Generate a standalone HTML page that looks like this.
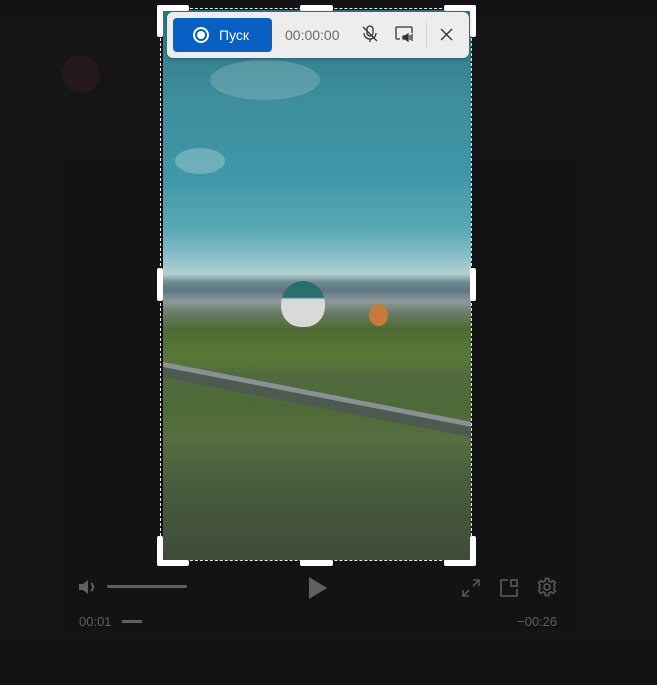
<!DOCTYPE html><html><head><style>
body{margin:0;width:657px;height:685px;background:#151517;position:relative;overflow:hidden;font-family:"Liberation Sans",sans-serif}
.a{position:absolute}
</style></head><body>
<div class="a" style="left:0;top:0;width:657px;height:18px;background:#131315"></div>
<div class="a" style="left:62px;top:55px;width:38px;height:38px;border-radius:50%;background:#24191a"></div>
<div class="a" style="left:60px;top:160px;width:520px;height:470px;background:#121315"></div>
<div class="a" style="left:0;top:640px;width:657px;height:45px;background:#131315"></div>
<div class="a" style="left:163px;top:10px;width:308px;height:550px;overflow:hidden;background:linear-gradient(180deg,#2c7684 0%,#3d8c9c 15%,#3f97a7 30%,#5aa8b6 40%,#8cc0ca 45%,#b3d0d3 48%,#6f8a92 49.5%,#5d7782 51%,#8e9a9a 53%,#6b7d68 55%,#4f6b34 58%,#587836 63%,#516a3e 67%,#4d6a36 72%,#566e40 78%,#4a5e3e 85%,#44553c 92%,#3e4c38 100%)">
<div class="a" style="left:0;top:352px;width:330px;height:5px;background:#8a9196;transform:rotate(11deg);transform-origin:0 0"></div>
<div class="a" style="left:0;top:357px;width:330px;height:10px;background:#4d5a50;transform:rotate(11deg);transform-origin:0 0"></div>
<div class="a" style="left:12px;top:138px;width:50px;height:26px;border-radius:50%;background:rgba(200,220,225,.35)"></div>
<div class="a" style="left:47px;top:50px;width:110px;height:40px;border-radius:50%;background:rgba(190,215,220,.25)"></div>
<div class="a" style="left:118px;top:271px;width:44px;height:46px;border-radius:50% 50% 45% 45%;background:linear-gradient(180deg,#2a6e6e 0 35%,#d8dad8 40% 100%)"></div>
<div class="a" style="left:206px;top:294px;width:19px;height:22px;border-radius:50%;background:#c87a3a"></div>
</div>
<div class="a" style="left:160px;top:8px;width:312px;height:553px;border:1px dashed #eee;box-sizing:border-box"></div>
<div class="a" style="left:157px;top:5px;width:32px;height:6px;background:#fff;border-radius:2px"></div>
<div class="a" style="left:157px;top:5px;width:6px;height:32px;background:#fff;border-radius:2px"></div>
<div class="a" style="left:444px;top:5px;width:32px;height:6px;background:#fff;border-radius:2px"></div>
<div class="a" style="left:470px;top:5px;width:6px;height:32px;background:#fff;border-radius:2px"></div>
<div class="a" style="left:300px;top:5px;width:33px;height:6px;background:#fff;border-radius:2px"></div>
<div class="a" style="left:157px;top:536px;width:6px;height:30px;background:#fff;border-radius:2px"></div>
<div class="a" style="left:157px;top:560px;width:32px;height:6px;background:#fff;border-radius:2px"></div>
<div class="a" style="left:470px;top:536px;width:6px;height:30px;background:#fff;border-radius:2px"></div>
<div class="a" style="left:444px;top:560px;width:32px;height:6px;background:#fff;border-radius:2px"></div>
<div class="a" style="left:300px;top:560px;width:33px;height:6px;background:#fff;border-radius:2px"></div>
<div class="a" style="left:157px;top:268px;width:6px;height:33px;background:#fff;border-radius:2px"></div>
<div class="a" style="left:470px;top:268px;width:6px;height:33px;background:#fff;border-radius:2px"></div>
<div class="a" style="left:167px;top:12px;width:302px;height:46px;background:#ededed;border-radius:6px;box-shadow:0 1px 4px rgba(0,0,0,.3)"></div>
<div class="a" style="left:173px;top:18px;width:99px;height:34px;background:#0860c4;border-radius:4px;color:#fff;font-size:14px;line-height:34px">
<span class="a" style="left:20px;top:9px;width:12px;height:12px;border:2px solid #fff;border-radius:50%"></span>
<span class="a" style="left:24px;top:13px;width:8px;height:8px;background:#fff;border-radius:50%"></span>
<span class="a" style="left:46px;top:0">Пуск</span></div>
<div class="a" style="left:285px;top:27px;font-size:14px;color:#6b6b6b">00:00:00</div>
<svg class="a" style="left:360px;top:24px" width="20" height="20" viewBox="0 0 20 20" fill="none" stroke="#333" stroke-width="1.3"><rect x="7" y="2" width="6" height="10" rx="3"/><path d="M4 9a6 6 0 0 0 12 0M10 15v3M3 3l14 14"/></svg>
<svg class="a" style="left:394px;top:25px" width="20" height="18" viewBox="0 0 20 18" fill="none" stroke="#333" stroke-width="1.3"><path d="M6 14H3a1 1 0 0 1-1-1V3a1 1 0 0 1 1-1h14a1 1 0 0 1 1 1v5"/><path d="M9 11h2l3-2v7l-3-2H9z" fill="#333"/><path d="M16 10v5M18 9v7"/></svg>
<div class="a" style="left:426px;top:22px;width:1px;height:26px;background:#d5d5d5"></div>
<svg class="a" style="left:440px;top:28px" width="13" height="13" viewBox="0 0 13 13" stroke="#333" stroke-width="1.4"><path d="M1 1l11 11M12 1L1 12"/></svg>
<svg class="a" style="left:78px;top:578px" width="20" height="18" viewBox="0 0 20 18" fill="#5f5f5f"><path d="M1 6h4l5-4v14l-5-4H1z"/><path d="M13 5a5 5 0 0 1 0 8" stroke="#5f5f5f" stroke-width="2" fill="none"/></svg>
<div class="a" style="left:107px;top:585px;width:80px;height:3px;background:#5f5f5f;border-radius:2px"></div>
<svg class="a" style="left:308px;top:576px" width="20" height="24" viewBox="0 0 20 24"><path d="M1 1l18 11L1 23z" fill="#5f5f5f"/></svg>
<svg class="a" style="left:461px;top:578px" width="20" height="20" viewBox="0 0 20 20" stroke="#555" stroke-width="1.6" fill="none"><path d="M12 2h6v6M18 2l-6 6M8 18H2v-6M2 18l6-6"/></svg>
<svg class="a" style="left:499px;top:578px" width="20" height="20" viewBox="0 0 20 20" stroke="#555" stroke-width="1.8" fill="none"><path d="M9 2H3a1 1 0 0 0-1 1v14a1 1 0 0 0 1 1h14a1 1 0 0 0 1-1v-6"/><rect x="12" y="2" width="6" height="6"/></svg>
<svg class="a" style="left:537px;top:577px" width="20" height="20" viewBox="0 0 20 20" stroke="#555" stroke-width="1.7" fill="none"><circle cx="10" cy="10" r="3"/><path d="M8.5 1.5h3l.5 2.5 2 1 2.3-1.2 2 2L17 8l.8 2-.8 2 1.3 2.2-2 2L14 15l-2 1-.5 2.5h-3L8 16l-2-1-2.3 1.2-2-2L3 12l-.8-2L3 8 1.7 5.8l2-2L6 5l2-1z"/></svg>
<div class="a" style="left:79px;top:614px;font-size:13px;color:#5f5f5f">00:01</div>
<div class="a" style="left:122px;top:620px;width:20px;height:3px;background:#5f5f5f"></div>
<div class="a" style="left:517px;top:614px;font-size:13px;color:#5f5f5f">−00:26</div>
</body></html>
